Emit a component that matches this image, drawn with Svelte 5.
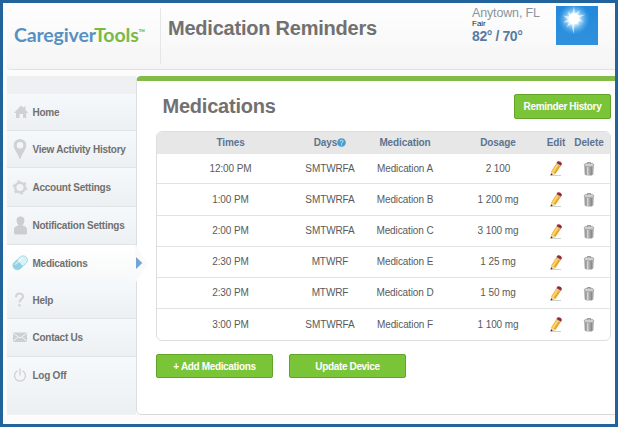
<script>
  const nav = [
    { label: 'Home', icon: 'home', height: 37 },
    { label: 'View Activity History', icon: 'pin', height: 37 },
    { label: 'Account Settings', icon: 'gear', height: 39 },
    { label: 'Notification Settings', icon: 'user', height: 38 },
    { label: 'Medications', icon: 'pill', height: 37, active: true },
    { label: 'Help', icon: 'help', height: 37 },
    { label: 'Contact Us', icon: 'mail', height: 38 },
    { label: 'Log Off', icon: 'power', height: 57 }
  ];

  const medications = [
    { time: '12:00 PM', days: 'SMTWRFA', name: 'Medication A', dosage: '2 100' },
    { time: '1:00 PM', days: 'SMTWRFA', name: 'Medication B', dosage: '1 200 mg' },
    { time: '2:00 PM', days: 'SMTWRFA', name: 'Medication C', dosage: '3 100 mg' },
    { time: '2:30 PM', days: 'MTWRF', name: 'Medication E', dosage: '1 25 mg' },
    { time: '2:30 PM', days: 'MTWRF', name: 'Medication D', dosage: '1 50 mg' },
    { time: '3:00 PM', days: 'SMTWRFA', name: 'Medication F', dosage: '1 100 mg' }
  ];
</script>

<div class="page">
  <header>
    <div class="logo"><span class="care">Caregiver</span><span class="tools">Tools</span><sup>™</sup></div>
    <h1>Medication Reminders</h1>
    <div class="weather">
      <div class="place">Anytown, FL</div>
      <div class="sky">Fair</div>
      <div class="temp">82° / 70°</div>
    </div>
    <svg class="sun" width="42" height="39" viewBox="0 0 42 39">
      <defs>
        <linearGradient id="sky" x1="0" y1="0" x2="0" y2="1">
          <stop offset="0" stop-color="#2388dc" />
          <stop offset="1" stop-color="#3091dd" />
        </linearGradient>
        <radialGradient id="glow">
          <stop offset="0" stop-color="#fff" />
          <stop offset=".35" stop-color="#d8f2ff" stop-opacity=".9" />
          <stop offset="1" stop-color="#4db2f0" stop-opacity="0" />
        </radialGradient>
      </defs>
      <rect width="42" height="39" fill="url(#sky)" />
      <circle cx="18" cy="13" r="16" fill="url(#glow)" />
      <path d="M18 0l1 8 5-4-2.500 5.500 8-1-7 3.500 5 4-6-1.500 1 5-3.500-3.500L17.500 28l-2-10-4.500 3 2-5-6 .5 5-3-5-4 6 1-1-5 4 4z" fill="#fff" fill-opacity=".65" />
      <circle cx="18" cy="12.500" r="5.500" fill="#fff" />
    </svg>
  </header>

  <div class="body">
    <nav>
      <div class="nav-top"></div>
      {#each nav as item}
        <a href="#{item.icon}" class="nav-item" class:active={item.active} class:last={item.icon === 'power'} style="height: {item.height}px">
          <svg class="icon" width="18" height="22" viewBox="0 0 18 22">
            {#if item.icon === 'home'}
              <path d="M9 4.500l2.500 2.400V5.500h2v3.300L16.200 12h-2v5H11v-4H7.500v4H4v-5H2z" fill="#cfd1d4" />
            {:else if item.icon === 'pin'}
              <path fill-rule="evenodd" d="M8 1a6.300 6.300 0 0 1 6.300 6.300C14.300 12 10 15 8.500 21h-1C6 15 1.700 12 1.700 7.300A6.300 6.300 0 0 1 8 1zm0 3a3.300 3.300 0 1 0 0 6.600A3.300 3.300 0 0 0 8 4z" fill="#cfd1d4" />
            {:else if item.icon === 'gear'}
              <circle cx="8" cy="11.500" r="4.800" fill="none" stroke="#d2d4d6" stroke-width="2.400" />
              <circle cx="8" cy="11.500" r="6.300" fill="none" stroke="#d2d4d6" stroke-width="2" stroke-dasharray="2.600 4" />
            {:else if item.icon === 'user'}
              <path d="M8.500 1.500c2.800 0 4.200 2 3.900 4.500-.2 1.800-.9 3.200-1.900 4 0 1.300 4.500.8 4.500 4.500v3.500c0 1-1 1.500-2 1.500H4c-1 0-2-.5-2-1.500v-3.500c0-3.700 4.500-3.200 4.500-4.500-1-.8-1.700-2.200-1.900-4-.3-2.500 1.100-4.500 3.900-4.500z" fill="#cbcdd0" />
            {:else if item.icon === 'pill'}
              <g transform="rotate(-42 8 11)">
                <rect x="0" y="6.700" width="16.500" height="8.600" rx="4.300" fill="#d9f1f7" stroke="#a5d5e3" stroke-width=".9" />
                <path d="M8 6.700H4.300a4.300 4.300 0 0 0 0 8.600H8z" fill="#8fd2e4" />
                <rect x="3" y="8" width="10.500" height="1.800" rx=".9" fill="#fff" fill-opacity=".5" />
              </g>
            {:else if item.icon === 'help'}
              <path d="M4 8.200c0-5 7-4.600 7-.8 0 2.800-3.500 2.700-3.500 6" fill="none" stroke="#d0d2d4" stroke-width="2" />
              <circle cx="7.500" cy="16.300" r="1.200" fill="#d0d2d4" />
            {:else if item.icon === 'mail'}
              <rect x="1" y="5.500" width="14" height="9.500" rx="1" fill="#cdd0d3" />
              <path d="M1.500 6.500L8 11l6.500-4.500M1.500 14L6 10M14.500 14L10 10" fill="none" stroke="#f2f4f5" />
            {:else}
              <path d="M5.500 5.800a5.500 5.500 0 1 0 5 0M8 3.500v7" fill="none" stroke="#ced0d3" stroke-width="1.300" />
            {/if}
          </svg>
          <span>{item.label}</span>
          {#if item.active}
            <svg class="pointer" width="14" height="37" viewBox="0 0 14 37">
              <path d="M0 0h1l12 18.500L1 37H0z" fill="#fafafb" />
              <path d="M1 12l6.300 6L1 24z" fill="#71a5d4" />
            </svg>
          {/if}
        </a>
      {/each}
    </nav>

    <main>
      <div class="title-row">
        <h2>Medications</h2>
        <button class="history">Reminder History</button>
      </div>

      <div class="table">
        <div class="row head">
          <span>Times</span>
          <span class="days">Days<svg width="9" height="9" viewBox="0 0 9 9"><circle cx="4.500" cy="4.500" r="4.300" fill="#4c9bcc" /><path d="M3 3.600c0-2 3-1.800 3-.2 0 1.100-1.500 1-1.500 2.300M4.500 6.400v1" stroke="#d9f0fc" fill="none" /></svg></span>
          <span>Medication</span>
          <span>Dosage</span>
          <span>Edit</span>
          <span>Delete</span>
        </div>
        {#each medications as med}
          <div class="row">
            <span>{med.time}</span>
            <span>{med.days}</span>
            <span>{med.name}</span>
            <span>{med.dosage}</span>
            <span>
              <svg width="14" height="16" viewBox="0 0 14 16">
                <path d="M3 14.500h9" stroke="#cfd2cc" stroke-width="1.200" />
                <path d="M2.200 10.200L7.300 2.300l4.500 2.700-5.300 8-4.500 1.500z" fill="#f2b93e" />
                <path d="M3.800 11L9 3.200" stroke="#fbd877" stroke-width="1.400" />
                <path d="M5.800 12.200l5.100-7.700" stroke="#e0982f" />
                <path d="M2.200 10.200l4.300 2.800-4.500 1.500z" fill="#f3d9a8" />
                <path d="M2 12.300l1.700 1.300-2.200 1.200z" fill="#2e2724" />
                <path d="M7 3l1.300-1.900 4.400 2.500-1.300 2z" fill="#c9c5c2" />
                <path d="M7.500 2.100L8.500.5c1.800-.8 4.300.6 4.400 2.500L12 4.700z" fill="#982b32" />
              </svg>
            </span>
            <span>
              <svg width="12" height="16" viewBox="0 0 12 16">
                <path d="M1.200 4h9.600L10.400 13.300c-.3 1.700-8.500 1.700-8.800 0z" fill="#a6a6a6" />
                <path d="M2.700 5.500l.2 8.500" stroke="#999" />
                <path d="M4.700 5.500v9" stroke="#d6d6d6" stroke-width="1.500" />
                <path d="M8.300 5.500v8.800" stroke="#8b8b8b" stroke-width="1.300" />
                <ellipse cx="6" cy="3.900" rx="5" ry="1.900" fill="#cfcfcf" stroke="#999" stroke-width=".7" />
                <path d="M4.500 2.800V1.500h3v1.300" fill="none" stroke="#999" />
              </svg>
            </span>
          </div>
        {/each}
      </div>

      <div class="actions">
        <button>+ Add Medications</button>
        <button>Update Device</button>
      </div>
    </main>
  </div>
</div>

<style>
  :global(body) {
    margin: 0;
  }

  .page {
    box-sizing: border-box;
    width: 618px;
    height: 427px;
    border: 3px solid #23639b;
    padding-left: 4px;
    background: #fcfcfc;
    font-family: 'Liberation Sans', Arial, sans-serif;
    overflow: hidden;
  }

  header {
    box-sizing: border-box;
    height: 67px;
    display: flex;
    align-items: flex-start;
    background: linear-gradient(#fefefe, #f5f5f5);
    border-bottom: 1px solid #e1e1e1;
    border-bottom-left-radius: 4px;
  }

  .logo {
    box-sizing: border-box;
    width: 154px;
    height: 56px;
    margin-top: 5px;
    padding: 16px 0 0 7px;
    border-right: 1px solid #e6e6e6;
    font-family: Lato, sans-serif;
    font-weight: 700;
    font-size: 19.500px;
    line-height: 22px;
    letter-spacing: -0.150px;
    white-space: nowrap;
  }

  .care {
    color: #5691c2;
  }

  .tools,
  sup {
    color: #79ba45;
  }

  sup {
    font-size: 9px;
    line-height: 0;
    vertical-align: 6px;
    letter-spacing: 0;
  }

  h1,
  h2 {
    margin: 0;
    color: #717171;
    font-weight: bold;
    letter-spacing: -0.220px;
    white-space: nowrap;
  }

  h1 {
    width: 311px;
    padding: 13px 0 0 7px;
    font-size: 20px;
    line-height: 24px;
    box-sizing: border-box;
  }

  .weather {
    width: 77px;
    padding-top: 3px;
    white-space: nowrap;
  }

  .place {
    color: #8b949c;
    font-size: 12.500px;
    line-height: 14px;
    letter-spacing: -0.150px;
  }

  .sky {
    color: #222;
    font-size: 8px;
    line-height: 8px;
  }

  .temp {
    color: #587ba2;
    font-size: 14px;
    font-weight: bold;
    line-height: 17px;
    letter-spacing: -0.400px;
  }

  .sun {
    margin: 3px 0 0 7px;
  }

  .body {
    display: flex;
    margin-top: 6px;
    height: 339px;
  }

  nav {
    width: 129px;
    background: #eff1f3;
  }

  .nav-top {
    height: 18px;
    background: #eff0f1;
  }

  .nav-item {
    position: relative;
    box-sizing: border-box;
    display: flex;
    align-items: center;
    padding-left: 5px;
    gap: 2.500px;
    border-bottom: 1px solid #e0e3e5;
    background: linear-gradient(#f6f9fb, #edf0f2);
    color: #707070;
    font-size: 10px;
    font-weight: bold;
    letter-spacing: -0.250px;
    text-decoration: none;
    white-space: nowrap;
  }

  .nav-item.active {
    background: linear-gradient(#fff, #f7f8f9);
    border-bottom-color: #f4f6f7;
  }

  .nav-item.last {
    align-items: flex-start;
    padding-top: 8px;
    border-bottom: 0;
  }

  .last span {
    line-height: 22px;
  }

  .pointer {
    position: absolute;
    left: 128px;
    top: 0;
    z-index: 1;
  }

  main {
    box-sizing: border-box;
    flex: 1;
    padding: 14px 4px 0 19px;
    background: #fff;
    border-top: 5px solid #82bc46;
    border-left: 1px solid #dcdfe1;
    border-bottom: 1px solid #d9d9d9;
    border-radius: 5px 0 0 5px;
  }

  .title-row {
    display: flex;
    justify-content: space-between;
    height: 36px;
  }

  h2 {
    padding-left: 6.500px;
    font-size: 20px;
    line-height: 22px;
  }

  button {
    box-sizing: border-box;
    width: 117px;
    height: 24px;
    padding: 0;
    background: #7ac437;
    border: 1px solid #63a52b;
    border-radius: 2px;
    color: #fff;
    font-family: inherit;
    font-size: 10px;
    font-weight: bold;
    letter-spacing: -0.350px;
    white-space: nowrap;
  }

  .history {
    width: 97px;
    height: 25px;
    margin-top: -1px;
  }

  .table {
    box-sizing: border-box;
    height: 210px;
    border: 1px solid #dedede;
    border-radius: 6px;
    overflow: hidden;
  }

  .row {
    box-sizing: border-box;
    display: grid;
    grid-template-columns: 147px 52px 98px 88px 28px 38px;
    align-items: center;
    height: 31px;
    padding-bottom: 1px;
    border-bottom: 1px solid #e2e2e2;
    color: #5a5a5a;
    font-size: 10px;
    letter-spacing: -0.100px;
    text-align: center;
    white-space: nowrap;
  }

  .row:nth-child(2) {
    height: 30px;
  }

  .row:nth-child(3) {
    height: 32px;
  }

  .row:last-child {
    border-bottom: 0;
  }

  .row.head {
    height: 22px;
    background: #e7e7e7;
    border-bottom: 0;
    color: #5c748f;
    font-weight: bold;
  }

  .row svg {
    display: block;
    margin: 2px auto 0;
  }

  .head .days {
    display: flex;
    justify-content: center;
    align-items: center;
  }

  .days svg {
    margin: 0;
  }

  .actions {
    display: flex;
    gap: 16px;
    margin-top: 13px;
  }
</style>
